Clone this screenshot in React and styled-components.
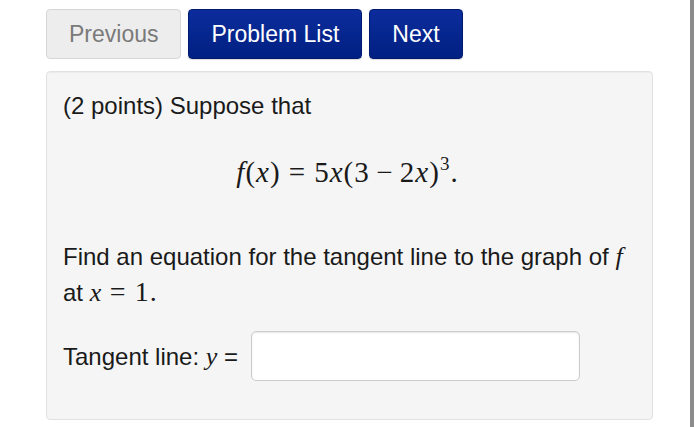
import styled, { createGlobalStyle } from "styled-components";

const GlobalStyle = createGlobalStyle`
    body {
        margin: 0;
        background: #fff;
        font-family: "Liberation Sans", Arial, sans-serif;
    }
`;

const App = () => {
    return (
        <>
            <GlobalStyle />
            <Page>
                <Main>
                    <NavBar>
                        <NavButton disabled>Previous</NavButton>
                        <NavButton $primary>Problem List</NavButton>
                        <NavButton $primary>Next</NavButton>
                    </NavBar>
                    <ProblemPanel>
                        <Line>(2 points) Suppose that</Line>
                        <Formula>
                            <Var>f</Var>(<Var>x</Var>)<Op $space="0.28em">=</Op>5<Var>x</Var>(3
                            <Op $space="0.22em">−</Op>2<Var>x</Var>)<Sup>3</Sup>.
                        </Formula>
                        <Paragraph>
                            Find an equation for the tangent line to the graph of <InlineVar>f</InlineVar>
                            <br />
                            at <InlineVar>x</InlineVar>
                            <InlineMath>
                                <Op $space="0.3em">=</Op>1.
                            </InlineMath>
                        </Paragraph>
                        <AnswerRow>
                            <span>
                                Tangent line: <InlineVar>y</InlineVar> =
                            </span>
                            <AnswerInput type="text" />
                        </AnswerRow>
                    </ProblemPanel>
                </Main>
                <ScrollBar />
            </Page>
        </>
    );
};

const Page = styled.div`
    display: flex;
    height: 427px;
    width: 700px;
    overflow: hidden;
`;

const Main = styled.div`
    display: flex;
    flex-direction: column;
    width: 607px;
    padding: 9px 0 0 46px;
`;

const NavBar = styled.div`
    display: flex;
    gap: 7px;
`;

const NavButton = styled.button`
    height: 50px;
    padding: 0 22px;
    border-radius: 4px;
    font-family: "Liberation Sans", Arial, sans-serif;
    font-size: 23px;
    color: ${(p) => (p.$primary ? "#fff" : "#7a7a7a")};
    background: ${(p) =>
        p.$primary ? "linear-gradient(to bottom, #0c2c9c, #002082)" : "#ededed"};
    border: 1px solid ${(p) => (p.$primary ? "#001a70" : "#d6d6d6")};
    box-shadow: ${(p) => (p.$primary ? "0 1px 1px rgba(0,0,0,0.15)" : "none")};
`;

const ProblemPanel = styled.div`
    margin-top: 12px;
    height: 349px;
    box-sizing: border-box;
    padding: 16px 16px 0 16px;
    background: #f5f5f5;
    border: 1px solid #e2e2e2;
    border-radius: 4px;
    box-shadow: inset 0 1px 1px rgba(0, 0, 0, 0.04);
    font-size: 24px;
    line-height: 35px;
    color: #1a1a1a;
`;

const Line = styled.div``;

const Formula = styled.div`
    margin-top: 32px;
    text-align: center;
    font-family: "Liberation Serif", "Times New Roman", serif;
    font-size: 29px;
    letter-spacing: 1px;
    padding-right: 4px;
`;

const Var = styled.i`
    font-family: "Liberation Serif", "Times New Roman", serif;
`;

const Op = styled.span`
    margin: 0 ${(p) => p.$space};
`;

const Sup = styled.sup`
    font-size: 19px;
    line-height: 0;
    vertical-align: 12px;
`;

const InlineVar = styled.i`
    font-family: "Liberation Serif", "Times New Roman", serif;
    font-size: 26px;
`;

const InlineMath = styled.span`
    font-family: "Liberation Serif", "Times New Roman", serif;
    font-size: 28px;
    letter-spacing: 1px;
`;

const Paragraph = styled.div`
    margin-top: 49px;
`;

const AnswerRow = styled.div`
    display: flex;
    align-items: center;
    gap: 13px;
    margin-top: 21px;
`;

const AnswerInput = styled.input`
    width: 329px;
    height: 50px;
    box-sizing: border-box;
    border: 1px solid #cccccc;
    border-radius: 5px;
    background: #fff;
    box-shadow: inset 0 1px 2px rgba(0, 0, 0, 0.1);
`;

const ScrollBar = styled.div`
    width: 4px;
    height: 100%;
    margin-left: 37px;
    background: #8c8c8c;
`;

export default App;
